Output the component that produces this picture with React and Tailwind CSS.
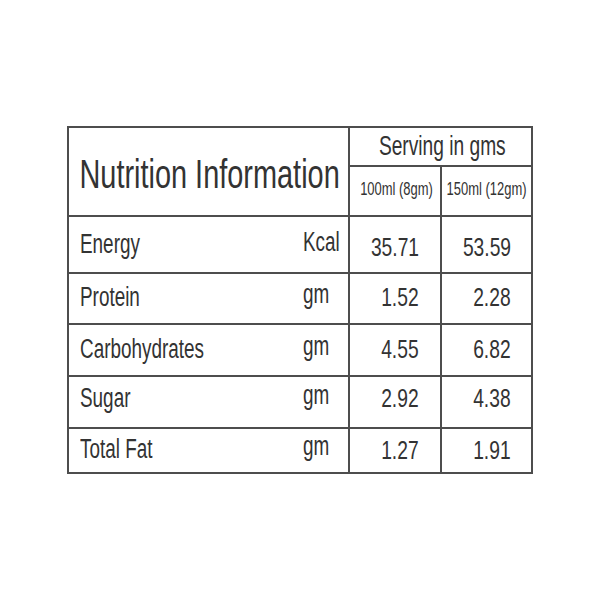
import React from "react";

const rows = [
  { label: "Energy", unit: "Kcal", a: "35.71", b: "53.59", pad: "pt-0", unitPad: "pb-[5px]", numPad: "pt-[4px]" },
  { label: "Protein", unit: "gm", a: "1.52", b: "2.28", pad: "pb-[3px]", unitPad: "pb-[9px]", numPad: "pb-[3px]" },
  { label: "Carbohydrates", unit: "gm", a: "4.55", b: "6.82", pad: "pb-[2px]", unitPad: "pb-[8px]", numPad: "pb-[2px]" },
  { label: "Sugar", unit: "gm", a: "2.92", b: "4.38", pad: "pb-[8px]", unitPad: "pb-[14px]", numPad: "pb-[8px]" },
  { label: "Total Fat", unit: "gm", a: "1.27", b: "1.91", pad: "pb-[2px]", unitPad: "pb-[8px]", numPad: "pb-[2px]" },
];

export default function App() {
  return (
    <div
      className="flex h-[600px] w-[600px] items-center justify-center bg-white text-[#333333]"
      style={{ fontFamily: '"Liberation Sans", Arial, sans-serif' }}
    >
      <div className="grid grid-cols-[279px_90px_89px] grid-rows-[37px_48px_55px_49px_50px_50px_43px] gap-[2px] bg-[#4d4d4d] p-[2px]">
        <div className="row-span-2 flex items-center justify-center bg-white pt-[6px] pl-[3px]">
          <span className="inline-block origin-center scale-x-[0.705] whitespace-nowrap text-[41px] leading-none">
            Nutrition Information
          </span>
        </div>
        <div className="col-span-2 flex items-center justify-center bg-white pl-[4px]">
          <span className="inline-block origin-center scale-x-[0.71] whitespace-nowrap text-[27px] leading-none">
            Serving in gms
          </span>
        </div>
        <div className="flex items-center justify-center bg-white pb-[5px] pl-[3px]">
          <span className="inline-block origin-center scale-x-[0.72] whitespace-nowrap text-[18px] leading-none">
            100ml (8gm)
          </span>
        </div>
        <div className="flex items-center justify-center bg-white pb-[5px]">
          <span className="inline-block origin-center scale-x-[0.72] whitespace-nowrap text-[18px] leading-none">
            150ml (12gm)
          </span>
        </div>
        {rows.map((r) => (
          <React.Fragment key={r.label}>
            <div className="flex items-center overflow-visible bg-white pl-[11px]">
              <div className={`flex w-[223px] shrink-0 items-center ${r.pad}`}>
                <span className="inline-block origin-left scale-x-[0.70] whitespace-nowrap text-[27px] leading-none">
                  {r.label}
                </span>
              </div>
              <div className={`flex shrink-0 items-center ${r.unitPad}`}>
                <span className="inline-block origin-left scale-x-[0.70] whitespace-nowrap text-[27px] leading-none">
                  {r.unit}
                </span>
              </div>
            </div>
            <div className={`flex items-center justify-end bg-white pr-[21px] ${r.numPad}`}>
              <span className="inline-block origin-right scale-x-[0.74] whitespace-nowrap text-[26px] leading-none">
                {r.a}
              </span>
            </div>
            <div className={`flex items-center justify-end bg-white pr-[20px] ${r.numPad}`}>
              <span className="inline-block origin-right scale-x-[0.74] whitespace-nowrap text-[26px] leading-none">
                {r.b}
              </span>
            </div>
          </React.Fragment>
        ))}
      </div>
    </div>
  );
}
